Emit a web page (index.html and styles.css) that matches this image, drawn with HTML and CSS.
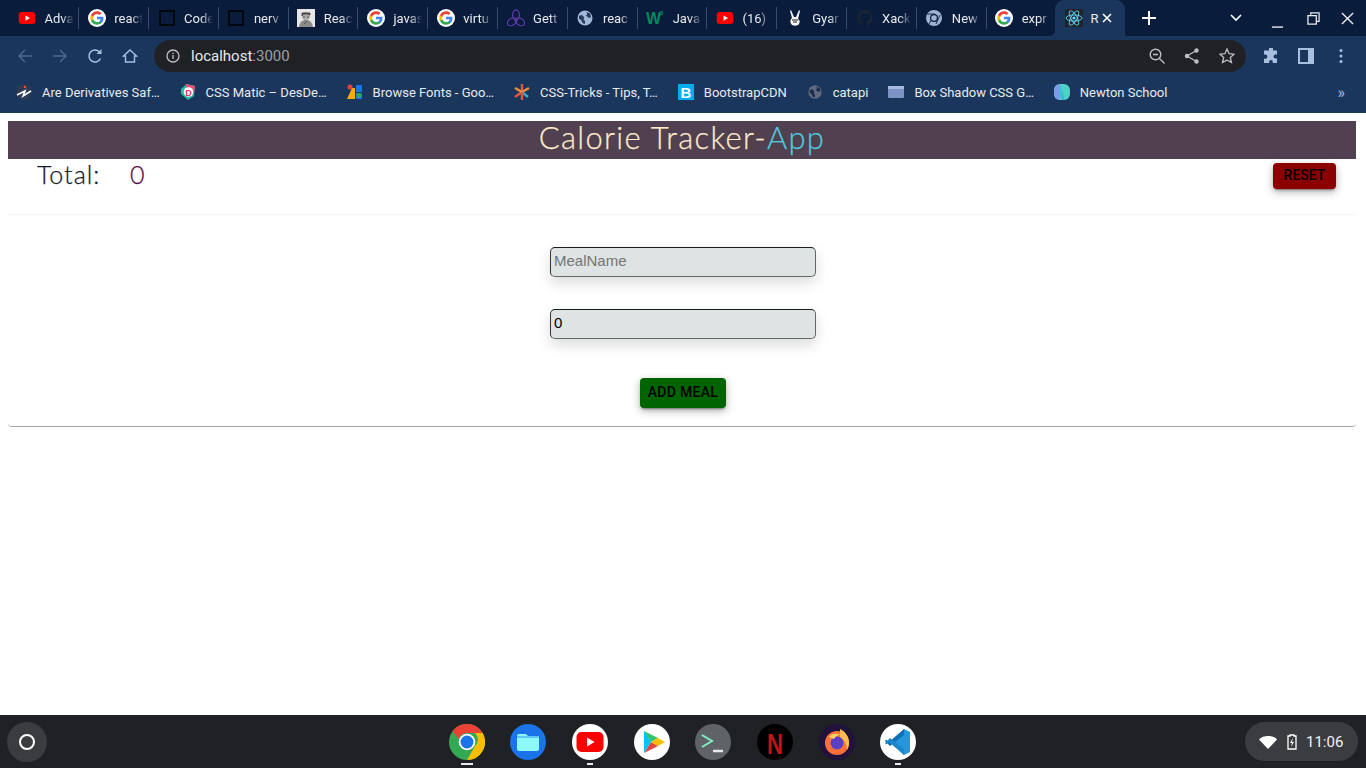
FILE: index.html
```html
<!DOCTYPE html>
<html lang="en">
  <head>
    <meta charset="utf-8" />
    <title>Calorie Tracker</title>
    <link rel="stylesheet" href="styles.css">
  </head>
  <body>
    <svg class="defs" width="0" height="0">
      <symbol id="g" viewBox="0 0 24 24">
        <circle cx="12" cy="12" r="12" fill="#fff"/>
        <path fill="#4285f4" d="M20.6 12.2c0-.6-.1-1.200-.2-1.800H12v3.400h4.800c-.2 1.100-.8 2-1.800 2.700v2.200h2.900c1.700-1.600 2.700-3.900 2.700-6.500z"/>
        <path fill="#34a853" d="M12 21c2.400 0 4.500-.8 5.900-2.200L15 16.500c-.8.500-1.800.9-3 .9-2.300 0-4.300-1.600-5-3.700H4v2.300C5.500 19 8.500 21 12 21z"/>
        <path fill="#fbbc05" d="M7 13.700c-.2-.5-.3-1.100-.3-1.700s.1-1.200.3-1.700V8H4c-.6 1.200-1 2.600-1 4s.4 2.800 1 4l3-2.300z"/>
        <path fill="#ea4335" d="M12 6.600c1.300 0 2.500.5 3.400 1.300l2.600-2.600C16.500 3.900 14.400 3 12 3 8.500 3 5.500 5 4 8l3 2.300c.7-2.100 2.700-3.700 5-3.700z"/>
      </symbol>
      <symbol id="yt" viewBox="0 0 24 24">
        <rect x="1" y="4" width="22" height="16" rx="4" fill="#f00"/>
        <path fill="#fff" d="M10 8.500v7l6-3.500z"/>
      </symbol>
      <symbol id="globe" viewBox="0 0 24 24">
        <circle cx="12" cy="12" r="10"/>
        <path fill="#0b1d3d" d="M4 9l4-1 3 3-1 3 2 2v4l-3-1-2-4-3-2zM14 4l5 2 1 5-3 1-2-2-2-1 2-2z" opacity=".8"/>
      </symbol>
    </svg>

    <div class="tabstrip">
      <div class="tab"><svg class="tab-icon"><use href="#yt"/></svg><span class="tab-title">Adva</span></div>
      <div class="tab"><svg class="tab-icon"><use href="#g"/></svg><span class="tab-title">react</span></div>
      <div class="tab"><span class="tab-icon square"></span><span class="tab-title">Code</span></div>
      <div class="tab"><span class="tab-icon square"></span><span class="tab-title">nerv</span></div>
      <div class="tab">
        <svg class="tab-icon" viewBox="0 0 18 18"><rect width="18" height="18" fill="#e6e6e6"/><circle cx="9" cy="7" r="4" fill="#aaa"/><path d="M2 18c1-6 4-7 7-7s6 1 7 7z" fill="#8a8a8a"/><path d="M5 4h8v2l-2-1H6l-1 2zM6 8h2M10 8h2M7 15l3-3" stroke="#444" stroke-width=".8" fill="#444"/></svg>
        <span class="tab-title">Reac</span>
      </div>
      <div class="tab"><svg class="tab-icon"><use href="#g"/></svg><span class="tab-title">javas</span></div>
      <div class="tab"><svg class="tab-icon"><use href="#g"/></svg><span class="tab-title">virtu</span></div>
      <div class="tab">
        <svg class="tab-icon" viewBox="0 0 18 18" fill="none" stroke="#5b3aa8" stroke-width="1.300"><ellipse cx="9" cy="6" rx="3.400" ry="5"/><ellipse cx="9" cy="6" rx="3.400" ry="5" transform="rotate(120 9 10.500)"/><ellipse cx="9" cy="6" rx="3.400" ry="5" transform="rotate(240 9 10.500)"/></svg>
        <span class="tab-title">Gett</span>
      </div>
      <div class="tab"><svg class="tab-icon globe-light"><use href="#globe"/></svg><span class="tab-title">reac</span></div>
      <div class="tab">
        <svg class="tab-icon" viewBox="0 0 18 18"><text x="0" y="15" class="logo-w">W</text><text x="14" y="6" class="logo-w3">3</text></svg>
        <span class="tab-title">Java</span>
      </div>
      <div class="tab"><svg class="tab-icon"><use href="#yt"/></svg><span class="tab-title">(16)</span></div>
      <div class="tab">
        <svg class="tab-icon" viewBox="0 0 18 18"><path d="M5 1l3 7h2l3-7 1 1-2 8c2 1 2 3 1 5-1 2-5 2-7 1-2-2-2-4-1-6l1-1-2-7z" fill="#f3f3f3"/><path d="M6 11h6M7 13h4" stroke="#222" stroke-width="1"/></svg>
        <span class="tab-title">Gyar</span>
      </div>
      <div class="tab">
        <svg class="tab-icon" viewBox="0 0 18 18"><path fill="#1a2434" d="M9 1a8 8 0 0 0-2.500 15.600c.4.100.5-.2.500-.4v-1.400c-2.200.5-2.700-1-2.700-1-.4-.9-.9-1.200-.9-1.200-.7-.5.100-.5.100-.5.800.1 1.200.8 1.200.8.700 1.200 1.900.9 2.300.7.100-.5.300-.9.500-1.100-1.800-.2-3.600-.9-3.600-4 0-.9.300-1.600.8-2.100-.1-.2-.4-1 .1-2.100 0 0 .7-.2 2.200.8a7.600 7.600 0 0 1 4 0c1.500-1 2.200-.8 2.200-.8.400 1.100.2 1.900.1 2.100.5.600.8 1.300.8 2.100 0 3.100-1.900 3.700-3.600 3.900.3.200.5.700.5 1.500v2.200c0 .2.100.5.500.4A8 8 0 0 0 9 1z"/></svg>
        <span class="tab-title">Xack</span>
      </div>
      <div class="tab">
        <svg class="tab-icon" viewBox="0 0 18 18"><circle cx="9" cy="9" r="8" fill="#9fb3d1"/><path d="M2 5h8M15 6l-4 9M4 15l4-7" stroke="#0b1d3d" stroke-width=".9"/><circle cx="9" cy="9" r="4" fill="#0b1d3d"/><circle cx="9" cy="9" r="2.800" fill="#9fb3d1"/></svg>
        <span class="tab-title">New</span>
      </div>
      <div class="tab"><svg class="tab-icon"><use href="#g"/></svg><span class="tab-title">expr</span></div>
      <div class="tab tab-active">
        <svg class="tab-icon" viewBox="0 0 18 18" fill="none" stroke="#61dafb" stroke-width=".9"><rect width="18" height="18" fill="#20232a" stroke="none"/><ellipse cx="9" cy="9" rx="8" ry="3.100"/><ellipse cx="9" cy="9" rx="8" ry="3.100" transform="rotate(60 9 9)"/><ellipse cx="9" cy="9" rx="8" ry="3.100" transform="rotate(120 9 9)"/><circle cx="9" cy="9" r="1.600" fill="#61dafb" stroke="none"/></svg>
        <span class="tab-title short">R</span>
        <svg class="tab-close" viewBox="0 0 12 12" stroke="#fff" stroke-width="1.600"><path d="M2 2l8 8M10 2l-8 8"/></svg>
      </div>
      <svg class="new-tab" viewBox="0 0 14 14" stroke="#fff" stroke-width="2"><path d="M7 0v14M0 7h14"/></svg>
      <div class="window-btns">
        <svg class="win chevron" viewBox="0 0 12 8" fill="none" stroke="#fff" stroke-width="1.600"><path d="M1 1l5 5 5-5"/></svg>
        <svg class="win minimize" viewBox="0 0 14 14" stroke="#e8eaed" stroke-width="1.500"><path d="M1 13h12"/></svg>
        <svg class="win restore" viewBox="0 0 14 14" fill="none" stroke="#e8eaed" stroke-width="1.400"><path d="M4 3V1h9v9h-3M1 4h9v9H1z"/></svg>
        <svg class="win close" viewBox="0 0 14 14" stroke="#e8eaed" stroke-width="1.500"><path d="M1 1l12 12M13 1L1 13"/></svg>
      </div>
    </div>

    <div class="toolbar">
      <button class="tool dim"><svg viewBox="0 0 16 16" fill="none" stroke="currentColor" stroke-width="1.400"><path d="M15 8H2M8 2L2 8l6 6"/></svg></button>
      <button class="tool dim"><svg viewBox="0 0 16 16" fill="none" stroke="currentColor" stroke-width="1.400"><path d="M1 8h13M8 2l6 6-6 6"/></svg></button>
      <button class="tool"><svg viewBox="0 0 16 16" fill="none" stroke="currentColor" stroke-width="1.500"><path d="M13.500 10.500A6 6 0 1 1 12.300 3.800L14 5.500"/><path d="M14.500 1v5h-5" fill="currentColor" stroke="none"/></svg></button>
      <button class="tool"><svg viewBox="0 0 16 16" fill="none" stroke="currentColor" stroke-width="1.400"><path d="M1.500 8L8 2l6.500 6H12.500v6h-9V8z"/></svg></button>
      <div class="omnibox">
        <svg class="omni-info" viewBox="0 0 14 14" fill="none" stroke="#bdc1c6" stroke-width="1.300"><circle cx="7" cy="7" r="6"/><path d="M7 6v4M7 3.800v1.200"/></svg>
        <span class="url">localhost<span class="url-port">:3000</span></span>
        <div class="omni-actions">
          <svg viewBox="0 0 16 16" fill="none" stroke="#bdc1c6" stroke-width="1.400"><circle cx="6.500" cy="6.500" r="5.300"/><path d="M4 6.500h5M10.500 10.500l5 5"/></svg>
          <svg viewBox="0 0 16 16" fill="#bdc1c6" stroke="#bdc1c6" stroke-width="1.200"><path d="M12.500 2.500L3 8l9.500 5.500" fill="none"/><circle cx="12.500" cy="2.500" r="1.600"/><circle cx="3" cy="8" r="1.600"/><circle cx="12.500" cy="13.500" r="1.600"/></svg>
          <svg viewBox="0 0 16 16" fill="none" stroke="#bdc1c6" stroke-width="1.300"><path d="M8 1l2.100 4.700 5 .5-3.800 3.300 1.100 5L8 11.900l-4.400 2.600 1.100-5L.9 6.200l5-.5z"/></svg>
        </div>
      </div>
      <button class="tool ext"><svg viewBox="0 0 16 16" fill="currentColor"><path d="M6 1a2 2 0 0 1 4 0v1.500h4v4h-1.500a2 2 0 0 0 0 4H14V15H9.800v-1.200a1.800 1.800 0 0 0-3.600 0V15H1v-4.200h1.200a2.200 2.200 0 0 0 0-4.400H1V2.500h5z"/></svg></button>
      <button class="tool ext"><svg viewBox="0 0 16 16"><path fill="currentColor" d="M0 0h16v16H0z"/><path fill="#1a365d" d="M2 2h8v12H2z"/></svg></button>
      <button class="tool ext"><svg viewBox="0 0 16 16" fill="currentColor"><circle cx="8" cy="2.500" r="1.500"/><circle cx="8" cy="8" r="1.500"/><circle cx="8" cy="13.500" r="1.500"/></svg></button>
    </div>

    <div class="bookmarks">
      <div class="bookmark">
        <svg class="bm-icon" viewBox="0 0 16 16"><circle cx="8" cy="8" r="8" fill="#2b3a55"/><path d="M1 11l8-4-2 5 8-5" fill="none" stroke="#fff" stroke-width="1.600"/><circle cx="9" cy="3" r="1.200" fill="#e8543a"/></svg>
        Are Derivatives Saf…
      </div>
      <div class="bookmark">
        <svg class="bm-icon" viewBox="0 0 16 16"><path d="M1 5l6-5 8 2-1 10-6 4-7-6z" fill="#2bb8a0"/><path d="M5 0l10 2-1 7-6-2z" fill="#ef4a72"/><circle cx="8.500" cy="8" r="4.800" fill="#fff"/><text x="8.500" y="11.500" class="logo-d">D</text></svg>
        CSS Matic – DesDe…
      </div>
      <div class="bookmark">
        <svg class="bm-icon" viewBox="0 0 16 16"><path d="M0 15L5 4h3v11z" fill="#f9ab00"/><path d="M9 1h6v7H9z" fill="#1a73e8"/><path d="M9 9h6v6H9z" fill="#1a73e8"/><circle cx="3" cy="3" r="2.500" fill="#ea4335"/><circle cx="12" cy="11.500" r="2.500" fill="#34a853"/></svg>
        Browse Fonts - Goo…
      </div>
      <div class="bookmark">
        <svg class="bm-icon" viewBox="0 0 16 16" stroke-width="2.400"><path d="M8 0v8" stroke="#e8543a"/><path d="M8 8l7-4" stroke="#f08a3c"/><path d="M8 8l6 5" stroke="#3aa8c8"/><path d="M8 8v8" stroke="#e8543a"/><path d="M8 8l-7 5" stroke="#e8543a"/><path d="M8 8L1 4" stroke="#f08a3c"/></svg>
        CSS-Tricks - Tips, T…
      </div>
      <div class="bookmark">
        <svg class="bm-icon" viewBox="0 0 16 16"><rect width="16" height="16" fill="#00aeef"/><text x="8" y="13.500" class="logo-b">B</text></svg>
        BootstrapCDN
      </div>
      <div class="bookmark">
        <svg class="bm-icon globe-gray"><use href="#globe"/></svg>
        catapi
      </div>
      <div class="bookmark">
        <svg class="bm-icon" viewBox="0 0 16 16"><rect y="2" width="16" height="12" rx="1" fill="#7c94c4"/><rect y="2" width="16" height="3" fill="#a6b8dc"/></svg>
        Box Shadow CSS G…
      </div>
      <div class="bookmark">
        <svg class="bm-icon" viewBox="0 0 16 16"><rect width="16" height="16" rx="6" fill="#4fd1c5"/><path d="M0 6a6 6 0 0 1 6-6h0v16h0a6 6 0 0 1-6-6z" fill="#7a9be8"/><path d="M6 0l5 16H7z" fill="#3fb8d8"/></svg>
        Newton School
      </div>
      <span class="bm-more">»</span>
    </div>

    <main class="page">
      <h1 class="app-title">Calorie Tracker-<span class="app-title-accent">App</span></h1>
      <div class="summary">
        <h2 class="total">Total: <span class="total-value">0</span></h2>
        <button class="btn btn-reset">Reset</button>
      </div>
      <form class="meal-form">
        <input class="meal-input" type="text" placeholder="MealName">
        <input class="meal-input" type="number" value="0">
        <button type="button" class="btn btn-add">Add Meal</button>
      </form>
    </main>

    <div class="shelf">
      <div class="launcher"><span class="launcher-ring"></span></div>
      <div class="shelf-apps">
        <div class="app running-wide">
          <svg viewBox="0 0 36 36"><circle cx="18" cy="18" r="18" fill="#34a853"/><path d="M18 0a18 18 0 0 1 15.600 9H18a9 9 0 0 0-8.500 6L3.500 7A18 18 0 0 1 18 0z" fill="#ea4335"/><path d="M33.600 9A18 18 0 0 1 18 36l7.800-13.500A9 9 0 0 0 26 9z" fill="#fbbc05"/><circle cx="18" cy="18" r="8.300" fill="#fff"/><circle cx="18" cy="18" r="6.500" fill="#1a73e8"/></svg>
        </div>
        <div class="app">
          <svg viewBox="0 0 36 36"><circle cx="18" cy="18" r="18" fill="#1a73e8"/><path d="M7 12a2 2 0 0 1 2-2h7l2 2h9a2 2 0 0 1 2 2v11a2 2 0 0 1-2 2H9a2 2 0 0 1-2-2z" fill="#8ef9fb"/><path d="M7 12h22v2H7z" fill="#5fc8f0"/></svg>
        </div>
        <div class="app running">
          <svg viewBox="0 0 36 36"><circle cx="18" cy="18" r="18" fill="#fff"/><rect x="4.500" y="8" width="27" height="20" rx="5" fill="#f00"/><path d="M15 13.500v9l7.500-4.500z" fill="#fff"/></svg>
        </div>
        <div class="app">
          <svg viewBox="0 0 36 36"><circle cx="18" cy="18" r="18" fill="#fff"/><path d="M10 7v11h7z" fill="#00d2ff"/><path d="M10 7l14 7-7 4z" fill="#34c26b"/><path d="M10 29l14-7-7-4z" fill="#e8453c"/><path d="M10 7v22l7-11z" fill="#00c4f5"/><path d="M24 14l7 4-7 4-7-4z" fill="#fbbc05"/></svg>
        </div>
        <div class="app">
          <svg viewBox="0 0 36 36"><circle cx="18" cy="18" r="18" fill="#5f6368"/><path d="M7 11l10 6-10 6" fill="none" stroke="#7ff0c0" stroke-width="2"/><path d="M18 27h10" stroke="#e8eaed" stroke-width="2.500"/></svg>
        </div>
        <div class="app">
          <svg viewBox="0 0 36 36"><circle cx="18" cy="18" r="18" fill="#000"/><text x="10" y="30" class="logo-n" textLength="16" lengthAdjust="spacingAndGlyphs">N</text></svg>
        </div>
        <div class="app">
          <svg viewBox="0 0 36 36"><circle cx="18" cy="18" r="18" fill="#20123a"/><circle cx="18" cy="19" r="12" fill="#ff7139"/><path d="M21 5c6 3 9 8 9 14 0 3-1 5-2 7 0-6-3-11-7-13z" fill="#ffbd4f"/><circle cx="18" cy="19" r="6.500" fill="#5b3fc4"/><path d="M10 13c3-4 8-4 11-2-3 0-5 2-6 4z" fill="#ffd567"/></svg>
        </div>
        <div class="app running">
          <svg viewBox="0 0 36 36"><circle cx="18" cy="18" r="18" fill="#fff"/><path d="M24 5l6 3v20l-6 3-12-12z" fill="#2496de"/><path d="M24 5L9 18l-3-2.500L5 17l5 5 14-11z" fill="#0f6fb5"/><path d="M24 31L9 18l-3 2.500L5 19l5-5 14 11z" fill="#1b86cc"/></svg>
        </div>
      </div>
      <div class="tray">
        <svg class="tray-wifi" viewBox="0 0 18 14"><path d="M9 14L0 4.500C2 2 5.500 1 9 1s7 1 9 3.500z" fill="#fff"/></svg>
        <svg class="tray-battery" viewBox="0 0 10 16"><path d="M3 1h4v1h2v13H1V2h2z" fill="none" stroke="#fff" stroke-width="1.300"/><path d="M6 4L3 9h2l-1 4 3-5H5z" fill="#fff"/></svg>
        <span class="tray-time">11:06</span>
      </div>
    </div>
  </body>
</html>
```

FILE: styles.css
```css
* {
  box-sizing: border-box;
}

html,
body {
  height: 100%;
}

body {
  margin: 0;
  display: flex;
  flex-direction: column;
  height: 768px;
  overflow: hidden;
  font-family: Roboto, "Noto Sans", sans-serif;
  background: #fff;
}

.defs {
  position: absolute;
}

/* browser tabs */
.tabstrip {
  display: flex;
  align-items: stretch;
  height: 36px;
  padding-left: 8.5px;
  background: #0a1c3c;
}

.tab {
  display: flex;
  align-items: center;
  width: 69.8px;
  height: 36px;
  padding-left: 9.5px;
  gap: 8.5px;
  position: relative;
}

.tab::after {
  content: "";
  position: absolute;
  right: -1px;
  top: 7px;
  width: 1px;
  height: 22px;
  background: #3b4c68;
}

.tab:nth-last-child(4)::after,
.tab-active::after {
  display: none;
}

.tab-icon {
  flex: none;
  display: block;
  width: 18px;
  height: 18px;
}

.square {
  border: 2px solid #03060e;
  border-radius: 1px;
  width: 16px;
  height: 16px;
  margin: 0 1px;
  background: #0a1c3c;
}

.tab-title {
  width: 32px;
  white-space: nowrap;
  font-size: 13px;
  color: #e8eaed;
  -webkit-mask-image: linear-gradient(to right, #000 17px, transparent 29px);
  mask-image: linear-gradient(to right, #000 17px, transparent 29px);
}

.tab-title.short {
  width: 7px;
  -webkit-mask-image: none;
  mask-image: none;
}

.tab-active {
  background: #1a365d;
  border-radius: 9px 9px 0 0;
  width: 70px;
  padding-left: 10px;
  gap: 7px;
}

.tab-active::before {
  content: "";
  position: absolute;
  left: -6px;
  bottom: 0;
  width: 6px;
  height: 6px;
  background: radial-gradient(circle at 0 0, transparent 6px, #1a365d 6.5px);
}

.tab-close {
  width: 12px;
  height: 12px;
  margin-left: -3px;
  flex: none;
}

.new-tab {
  align-self: center;
  width: 14px;
  height: 14px;
  margin-left: 17px;
  flex: none;
}

.window-btns {
  display: flex;
  align-items: center;
  margin-left: 74px;
}

.win {
  display: block;
  flex: none;
}

.chevron {
  width: 12px;
  height: 8px;
}

.minimize {
  width: 13px;
  height: 13px;
  margin-left: 29px;
  margin-top: 6px;
}

.restore {
  width: 13px;
  height: 13px;
  margin-left: 23px;
}

.close {
  width: 13px;
  height: 13px;
  margin-left: 21px;
}

/* toolbar */
.toolbar {
  display: flex;
  align-items: center;
  height: 40px;
  padding: 0 7.5px 0 7px;
  background: #1a365d;
}

.tool {
  flex: none;
  width: 35px;
  height: 32px;
  padding: 0;
  border: none;
  background: none;
  color: #a9bfdf;
  display: flex;
  align-items: center;
  justify-content: center;
}

.tool svg {
  width: 16px;
  height: 16px;
}

.tool.dim {
  color: #4f6a92;
}

.omnibox {
  flex: 1;
  display: flex;
  align-items: center;
  height: 32px;
  margin: 0 7.5px 0 7px;
  padding: 0 11px 0 12px;
  border-radius: 16px;
  background: #202124;
}

.omni-info {
  width: 14px;
  height: 14px;
  flex: none;
}

.url {
  margin-left: 11px;
  font-size: 15px;
  color: #e8eaed;
}

.url-port {
  color: #9aa0a6;
}

.omni-actions {
  margin-left: auto;
  display: flex;
  gap: 19px;
}

.omni-actions svg {
  width: 16px;
  height: 16px;
}

/* bookmarks */
.bookmarks {
  display: flex;
  align-items: center;
  gap: 20px;
  height: 37px;
  padding: 0 16px 5px;
  background: #1a365d;
}

.bookmark {
  display: flex;
  align-items: center;
  gap: 10px;
  white-space: nowrap;
  font-size: 13px;
  color: #e8eaed;
}

.bm-icon {
  width: 16px;
  height: 16px;
  flex: none;
}

.bm-more {
  margin-left: auto;
  margin-right: 5px;
  font-size: 16px;
  color: #a9bfdf;
}

.globe-light {
  fill: #9fb8dc;
}

.globe-gray {
  fill: #5f6b7d;
}

.logo-w {
  font: bold 16px "Liberation Sans", sans-serif;
  fill: #04895f;
}

.logo-w3 {
  font: bold 6px "Liberation Sans", sans-serif;
  fill: #04895f;
}

.logo-d {
  font: bold 9px "Liberation Sans", sans-serif;
  fill: #e0356a;
  text-anchor: middle;
}

.logo-b {
  font: bold 15px "Liberation Sans", sans-serif;
  fill: #fff;
  text-anchor: middle;
}

.logo-n {
  font: bold 30px "Liberation Sans", sans-serif;
  fill: #c4111a;
}

/* page */
.page {
  flex: 1;
  padding: 8px 10px 0 8px;
  background: #fff;
}

.app-title {
  margin: 0;
  height: 38px;
  line-height: 32px;
  text-align: center;
  font-family: Lato, sans-serif;
  font-size: 31px;
  font-weight: 300;
  letter-spacing: 1.3px;
  -webkit-text-stroke: 0.25px;
  color: #fdebcc;
  background: #51404f;
}

.app-title-accent {
  color: #4fc8de;
}

.summary {
  display: flex;
  justify-content: space-between;
  align-items: flex-start;
  height: 55px;
  padding: 4px 20px 0 29px;
}

.total {
  margin: 0;
  font-family: Lato, sans-serif;
  font-size: 25px;
  font-weight: 300;
  line-height: 22px;
  letter-spacing: 1px;
  -webkit-text-stroke: 0.25px;
  color: #111827;
  word-spacing: 22px;
}

.total-value {
  color: #5c0a4c;
}

.meal-form {
  display: flex;
  flex-direction: column;
  align-items: center;
  height: 213px;
  padding: 32px 0 0 2px;
  border-top: 1px solid #f6f6f6;
  border-bottom: 1px solid #aaa;
  border-radius: 0 0 4px 4px;
}

.meal-input {
  width: 266px;
  height: 30px;
  margin-bottom: 32px;
  padding: 0 3px 4px;
  border: 1px solid #666;
  border-top-color: #1c1c1c;
  border-left-color: #333;
  border-radius: 5px;
  background: #dde4e3;
  font-family: "Liberation Sans", sans-serif;
  font-size: 15px;
  color: #000;
  box-shadow: 0 6px 14px rgba(0, 0, 0, 0.14);
  outline: none;
}

.meal-input::placeholder {
  color: #757575;
}

.meal-input::-webkit-inner-spin-button {
  display: none;
}

.btn {
  border: none;
  border-radius: 4px;
  font-family: Roboto, sans-serif;
  font-size: 14px;
  font-weight: 500;
  letter-spacing: 0.3px;
  text-transform: uppercase;
  color: #060000;
  box-shadow: 0 3px 1px -2px rgba(0, 0, 0, 0.2), 0 2px 2px rgba(0, 0, 0, 0.14), 0 3px 8px rgba(0, 0, 0, 0.3);
}

.btn-reset {
  width: 63px;
  height: 26px;
  padding: 0 0 2px;
  letter-spacing: 0;
  background: #8b0000;
}

.btn-add {
  width: 86px;
  height: 30px;
  margin-top: 7px;
  padding: 0 0 2px;
  background: #006400;
}

/* chrome os shelf */
.shelf {
  display: grid;
  grid-template-columns: 1fr auto 1fr;
  align-items: center;
  height: 53px;
  padding: 0 8px 0 7px;
  background: #202124;
}

.launcher {
  width: 40px;
  height: 40px;
  border-radius: 50%;
  background: #3a3c3f;
  display: flex;
  align-items: center;
  justify-content: center;
}

.launcher-ring {
  width: 16px;
  height: 16px;
  border: 2px solid #fff;
  border-radius: 50%;
}

.shelf-apps {
  display: flex;
  gap: 25.7px;
}

.app {
  position: relative;
  width: 36px;
  height: 36px;
}

.app svg {
  display: block;
  width: 36px;
  height: 36px;
}

.app.running::after,
.app.running-wide::after {
  content: "";
  position: absolute;
  left: 15px;
  bottom: -5px;
  width: 6px;
  height: 2px;
  background: #e8eaed;
}

.app.running-wide::after {
  left: 12px;
  width: 12px;
}

.tray {
  justify-self: end;
  display: flex;
  align-items: center;
  width: 113px;
  height: 39px;
  padding-left: 14px;
  border-radius: 20px;
  background: #3a3c3f;
}

.tray-wifi {
  width: 18px;
  height: 14px;
}

.tray-battery {
  width: 10px;
  height: 16px;
  margin-left: 10px;
}

.tray-time {
  margin-left: 9px;
  font-size: 15px;
  color: #f1f3f4;
}
```
